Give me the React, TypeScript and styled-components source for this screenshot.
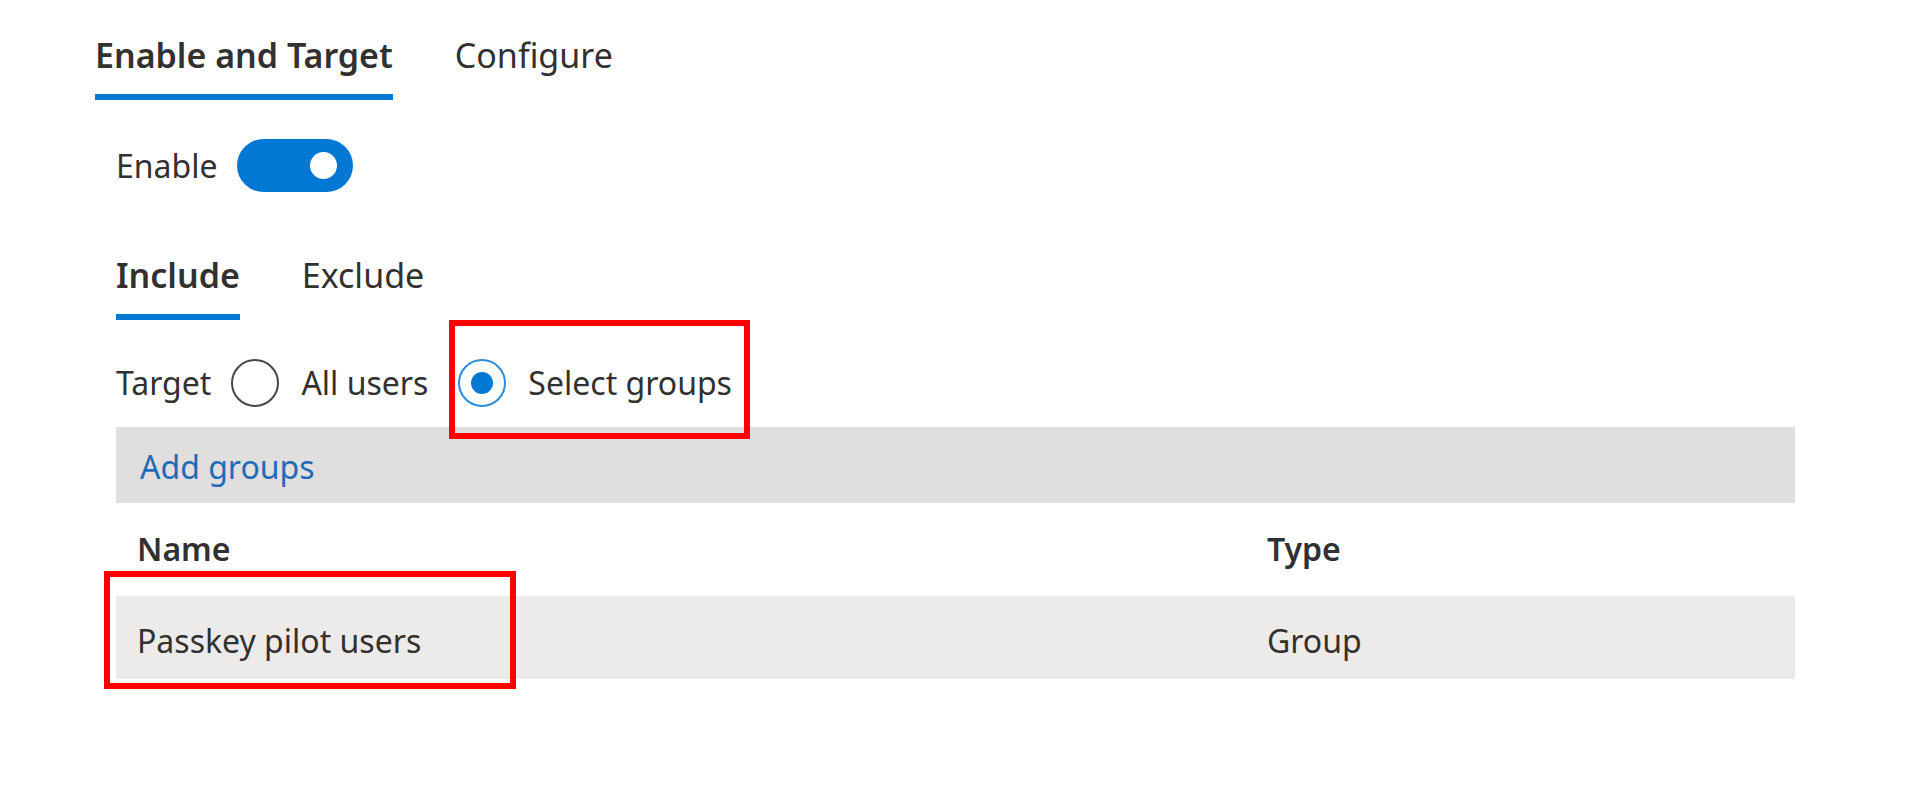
import React, { useState } from "react";
import styled, { createGlobalStyle } from "styled-components";

const GlobalStyle = createGlobalStyle`
  * {
    box-sizing: border-box;
  }
  body {
    margin: 0;
    background: #ffffff;
    color: #323130;
    font-family: "Segoe UI", "Noto Sans", "Open Sans", sans-serif;
    font-size: 32px;
    line-height: 44px;
  }
`;

const Page = styled.main`
  padding: 31px 125px 40px 95px;
`;

const Panel = styled.section`
  padding-left: 21px;
`;

const TabList = styled.div`
  display: flex;
  gap: 62px;
`;

const Tab = styled.button<{ $active: boolean }>`
  padding: 0 0 15px;
  border: 0;
  border-bottom: 6px solid ${(p) => (p.$active ? "#0078d4" : "transparent")};
  background: none;
  color: inherit;
  font-family: inherit;
  font-size: 34px;
  font-weight: ${(p) => (p.$active ? 600 : 400)};
  line-height: 48px;
  white-space: nowrap;
  cursor: pointer;
`;

const EnableRow = styled.div`
  display: flex;
  align-items: center;
  gap: 19px;
  padding: 39px 0 59px;
`;

const Toggle = styled.input`
  display: flex;
  align-items: center;
  justify-content: flex-end;
  appearance: none;
  width: 116px;
  height: 53px;
  margin: 0;
  padding: 0 16px;
  border-radius: 27px;
  background: #0078d4;
  cursor: pointer;

  &::before {
    content: "";
    width: 27px;
    height: 27px;
    border-radius: 50%;
    background: #ffffff;
  }

  &:not(:checked) {
    justify-content: flex-start;
    background: #8a8886;
  }
`;

const TargetGroup = styled.div`
  display: flex;
  align-items: center;
  gap: 20px;
  padding: 39px 0 20px;
`;

const Choices = styled.div`
  display: flex;
  gap: 30px;
`;

const Choice = styled.label`
  position: relative;
  display: flex;
  align-items: center;
  gap: 22px;
  white-space: nowrap;
  cursor: pointer;
`;

const Radio = styled.input`
  display: grid;
  place-items: center;
  appearance: none;
  width: 48px;
  height: 48px;
  margin: 0;
  border: 2px solid #484644;
  border-radius: 50%;
  background: #ffffff;
  cursor: pointer;

  &:checked {
    border-color: #2b8ddb;
  }

  &:checked::before {
    content: "";
    width: 22px;
    height: 22px;
    border-radius: 50%;
    background: #0078d4;
  }
`;

const Highlight = styled.span<{ $inset: string }>`
  position: absolute;
  inset: ${(p) => p.$inset};
  border: 6px solid #ff0000;
  pointer-events: none;
`;

const CommandBar = styled.div`
  padding: 18px 24px 14px;
  background: #e0dfdd;
`;

const AddLink = styled.a`
  color: #1f6cb8;
  text-decoration: none;
`;

const GroupTable = styled.table`
  width: 100%;
  border-collapse: collapse;
  table-layout: fixed;
  text-align: left;
`;

const HeadCell = styled.th<{ $width?: string }>`
  width: ${(p) => p.$width ?? "auto"};
  height: 93px;
  padding: 0 21px 2px;
  font-weight: 600;
`;

const Cell = styled.td`
  height: 83px;
  padding: 6px 21px 0;
  background: #edebe9;
`;

const CellContent = styled.div`
  position: relative;
  display: inline-block;
`;

const groups = [{ name: "Passkey pilot users", type: "Group" }];

function Tabs({ items, label }: { items: string[]; label: string }) {
  const [active, setActive] = useState(items[0]);
  return (
    <TabList role="tablist" aria-label={label}>
      {items.map((item) => (
        <Tab
          key={item}
          type="button"
          role="tab"
          aria-selected={item === active}
          $active={item === active}
          onClick={() => setActive(item)}
        >
          {item}
        </Tab>
      ))}
    </TabList>
  );
}

export default function App() {
  const [enabled, setEnabled] = useState(true);
  const [target, setTarget] = useState("groups");

  return (
    <>
      <GlobalStyle />
      <Page>
        <Tabs items={["Enable and Target", "Configure"]} label="Settings" />
        <Panel>
          <EnableRow>
            <label htmlFor="enable">Enable</label>
            <Toggle
              id="enable"
              type="checkbox"
              role="switch"
              checked={enabled}
              onChange={(e) => setEnabled(e.target.checked)}
            />
          </EnableRow>

          <Tabs items={["Include", "Exclude"]} label="Assignment" />

          <TargetGroup role="radiogroup" aria-labelledby="target-label">
            <span id="target-label">Target</span>
            <Choices>
              <Choice>
                <Radio
                  type="radio"
                  name="target"
                  checked={target === "all"}
                  onChange={() => setTarget("all")}
                />
                All users
              </Choice>
              <Choice>
                <Radio
                  type="radio"
                  name="target"
                  checked={target === "groups"}
                  onChange={() => setTarget("groups")}
                />
                Select groups
                <Highlight $inset="-39px -18px -32px -9px" />
              </Choice>
            </Choices>
          </TargetGroup>

          <CommandBar>
            <AddLink href="#add-groups">Add groups</AddLink>
          </CommandBar>

          <GroupTable>
            <thead>
              <tr>
                <HeadCell scope="col" $width="67.3%">Name</HeadCell>
                <HeadCell scope="col">Type</HeadCell>
              </tr>
            </thead>
            <tbody>
              {groups.map((group) => (
                <tr key={group.name}>
                  <Cell>
                    <CellContent>
                      {group.name}
                      <Highlight $inset="-48px -95px -26px -33px" />
                    </CellContent>
                  </Cell>
                  <Cell>{group.type}</Cell>
                </tr>
              ))}
            </tbody>
          </GroupTable>
        </Panel>
      </Page>
    </>
  );
}
